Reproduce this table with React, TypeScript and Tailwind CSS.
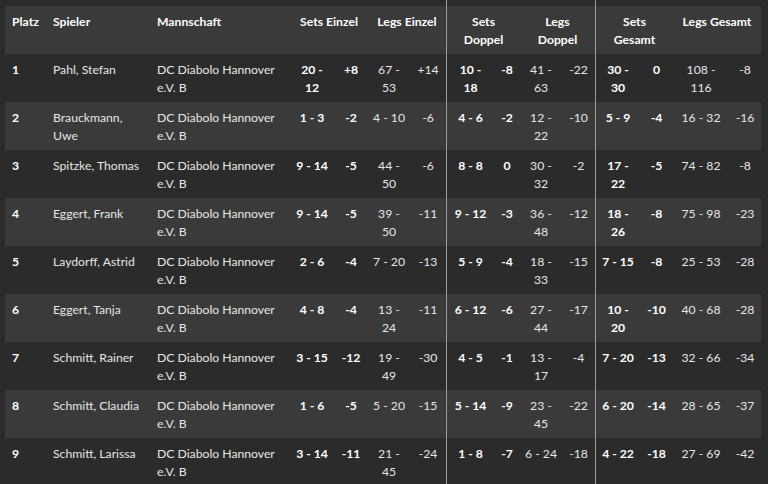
import React from "react";

type Row = {
  platz: number;
  name: string[];
  cells: [string, string][];
};

// each cell: [value, diff]; a "|" in value marks where the cell wraps
const rows: Row[] = [
  { platz: 1, name: ["Pahl, Stefan"], cells: [["20 -|12", "+8"], ["67 -|53", "+14"], ["10 -|18", "-8"], ["41 -|63", "-22"], ["30 -|30", "0"], ["108 -|116", "-8"]] },
  { platz: 2, name: ["Brauckmann,", "Uwe"], cells: [["1 - 3", "-2"], ["4 - 10", "-6"], ["4 - 6", "-2"], ["12 -|22", "-10"], ["5 - 9", "-4"], ["16 - 32", "-16"]] },
  { platz: 3, name: ["Spitzke, Thomas"], cells: [["9 - 14", "-5"], ["44 -|50", "-6"], ["8 - 8", "0"], ["30 -|32", "-2"], ["17 -|22", "-5"], ["74 - 82", "-8"]] },
  { platz: 4, name: ["Eggert, Frank"], cells: [["9 - 14", "-5"], ["39 -|50", "-11"], ["9 - 12", "-3"], ["36 -|48", "-12"], ["18 -|26", "-8"], ["75 - 98", "-23"]] },
  { platz: 5, name: ["Laydorff, Astrid"], cells: [["2 - 6", "-4"], ["7 - 20", "-13"], ["5 - 9", "-4"], ["18 -|33", "-15"], ["7 - 15", "-8"], ["25 - 53", "-28"]] },
  { platz: 6, name: ["Eggert, Tanja"], cells: [["4 - 8", "-4"], ["13 -|24", "-11"], ["6 - 12", "-6"], ["27 -|44", "-17"], ["10 -|20", "-10"], ["40 - 68", "-28"]] },
  { platz: 7, name: ["Schmitt, Rainer"], cells: [["3 - 15", "-12"], ["19 -|49", "-30"], ["4 - 5", "-1"], ["13 -|17", "-4"], ["7 - 20", "-13"], ["32 - 66", "-34"]] },
  { platz: 8, name: ["Schmitt, Claudia"], cells: [["1 - 6", "-5"], ["5 - 20", "-15"], ["5 - 14", "-9"], ["23 -|45", "-22"], ["6 - 20", "-14"], ["28 - 65", "-37"]] },
  { platz: 9, name: ["Schmitt, Larissa"], cells: [["3 - 14", "-11"], ["21 -|45", "-24"], ["1 - 8", "-7"], ["6 - 24", "-18"], ["4 - 22", "-18"], ["27 - 69", "-42"]] },
];

const headers = [
  ["Sets Einzel"],
  ["Legs Einzel"],
  ["Sets", "Doppel"],
  ["Legs", "Doppel"],
  ["Sets", "Gesamt"],
  ["Legs Gesamt"],
];

const colWidths = [41, 104, 140, 44, 34, 42, 36, 48, 26, 42, 33, 45, 33, 56, 32];

function Lines({ parts }: { parts: string[] }) {
  return (
    <>
      {parts.map((p, i) => (
        <span key={i} className="block">
          {p}
        </span>
      ))}
    </>
  );
}

export default function App() {
  return (
    <div
      className="min-h-screen bg-[#2b2b2b] pl-[5px] text-[12.2px] leading-[18px] text-[#e6e6e6]"
      style={{ fontFamily: "Lato, 'Open Sans', sans-serif" }}
    >
      <table className="table-fixed border-separate border-spacing-0 w-[756px]">
        <colgroup>
          {colWidths.map((w, i) => (
            <col key={i} style={{ width: w }} />
          ))}
        </colgroup>
        <thead>
          <tr className="h-[6px]">
            <td colSpan={7} className="p-0" />
            <td colSpan={4} className="p-0 border-l border-[#9d9d9d]" />
            <td colSpan={4} className="p-0 border-l border-[#9d9d9d]" />
          </tr>
          <tr className="h-12 bg-[#3a3a3a] font-bold text-white align-top">
            <th className="pl-[7px] pt-[7px] text-left">Platz</th>
            <th className="pl-[7px] pt-[7px] text-left">Spieler</th>
            <th className="pl-[7px] pt-[7px] text-left">Mannschaft</th>
            {headers.map((h, i) => (
              <th
                key={i}
                colSpan={2}
                className={
                  "pt-[7px] text-center whitespace-nowrap " +
                  (i === 2 || i === 4 ? "border-l border-[#9d9d9d]" : "")
                }
              >
                <Lines parts={h} />
              </th>
            ))}
          </tr>
        </thead>
        <tbody>
          {rows.map((r, ri) => (
            <tr
              key={r.platz}
              className={
                "h-12 align-top " + (ri % 2 === 1 ? "bg-[#3a3a3a]" : "")
              }
            >
              <td className="pl-[7px] pt-[7px] font-bold text-white">{r.platz}</td>
              <td className="pl-[7px] pt-[7px]">
                <Lines parts={r.name} />
              </td>
              <td className="pl-[7px] pt-[7px]">
                <Lines parts={["DC Diabolo Hannover", "e.V. B"]} />
              </td>
              {r.cells.map(([v, d], ci) => {
                const sets = ci % 2 === 0;
                const weight = sets ? "font-bold text-white" : "";
                return (
                  <React.Fragment key={ci}>
                    <td
                      className={
                        "pt-[7px] text-center whitespace-nowrap " +
                        weight +
                        (ci === 2 || ci === 4 ? " border-l border-[#9d9d9d]" : "")
                      }
                    >
                      <Lines parts={v.split("|")} />
                    </td>
                    <td className={"pt-[7px] text-center whitespace-nowrap " + weight}>
                      {d}
                    </td>
                  </React.Fragment>
                );
              })}
            </tr>
          ))}
        </tbody>
      </table>
    </div>
  );
}
